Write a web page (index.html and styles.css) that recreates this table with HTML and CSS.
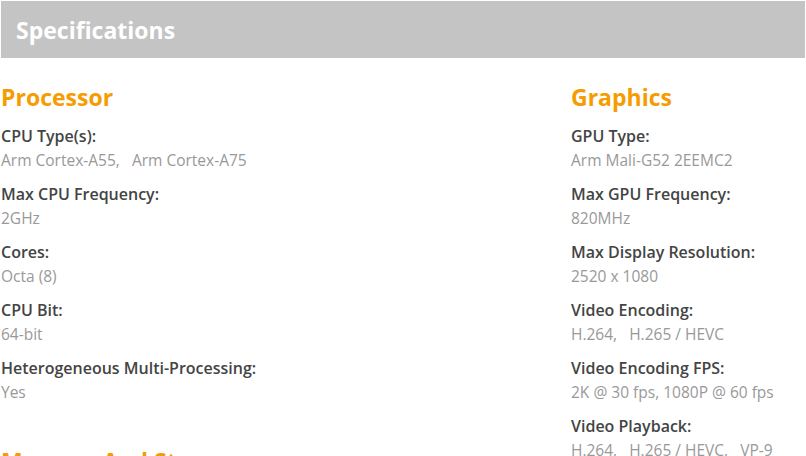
FILE: index.html
```html
<!DOCTYPE html>
<html>
<head>
<meta charset="utf-8">
<link rel="stylesheet" href="styles.css">
</head>
<body>
<div class="page">
  <div class="header"><h1 class="header-title">Specifications</h1></div>
  <div class="specs">
    <div class="col col-left">
      <section class="group">
        <h2 class="group-title">Processor</h2>
        <div class="item"><div class="label">CPU Type(s):</div><div class="value">Arm Cortex-A55,&nbsp;&nbsp; Arm Cortex-A75</div></div>
        <div class="item"><div class="label">Max CPU Frequency:</div><div class="value">2GHz</div></div>
        <div class="item"><div class="label">Cores:</div><div class="value">Octa (8)</div></div>
        <div class="item"><div class="label">CPU Bit:</div><div class="value">64-bit</div></div>
        <div class="item"><div class="label">Heterogeneous Multi-Processing:</div><div class="value">Yes</div></div>
      </section>
      <section class="group">
        <h2 class="group-title">Memory And Storage</h2>
      </section>
    </div>
    <div class="col col-right">
      <section class="group">
        <h2 class="group-title">Graphics</h2>
        <div class="item"><div class="label">GPU Type:</div><div class="value">Arm Mali-G52 2EEMC2</div></div>
        <div class="item"><div class="label">Max GPU Frequency:</div><div class="value">820MHz</div></div>
        <div class="item"><div class="label">Max Display Resolution:</div><div class="value">2520 x 1080</div></div>
        <div class="item"><div class="label">Video Encoding:</div><div class="value">H.264,&nbsp;&nbsp; H.265 / HEVC</div></div>
        <div class="item"><div class="label">Video Encoding FPS:</div><div class="value">2K @ 30 fps, 1080P @ 60 fps</div></div>
        <div class="item"><div class="label">Video Playback:</div><div class="value">H.264,&nbsp;&nbsp; H.265 / HEVC,&nbsp;&nbsp; VP-9</div></div>
      </section>
    </div>
  </div>
</div>
</body>
</html>
```
FILE: styles.css
```css
html, body {
  margin: 0;
  padding: 0;
  background: #ffffff;
}
body {
  font-family: "Open Sans", "Noto Sans", sans-serif;
  overflow: hidden;
}
.page {
  padding: 1px 1px 0 1px;
}
.header {
  background: #c4c4c4;
  height: 57px;
  display: flex;
  align-items: center;
  padding-left: 15px;
}
.header-title {
  margin: 0;
  color: #ffffff;
  font-size: 23px;
  font-weight: 700;
  padding-top: 1px;
}
.specs {
  display: grid;
  grid-template-columns: 570px 1fr;
  padding-top: 22px;
}
.group {
  margin-bottom: 40px;
}
.group-title {
  margin: 0 0 10px 0;
  color: #f59c00;
  font-size: 23px;
  font-weight: 700;
  line-height: 34px;
}
.item {
  margin-bottom: 10px;
}
.label {
  color: #444444;
  font-size: 16px;
  font-weight: 600;
  line-height: 24px;
}
.value {
  color: #999999;
  font-size: 15.5px;
  font-weight: 400;
  line-height: 24px;
}
```
